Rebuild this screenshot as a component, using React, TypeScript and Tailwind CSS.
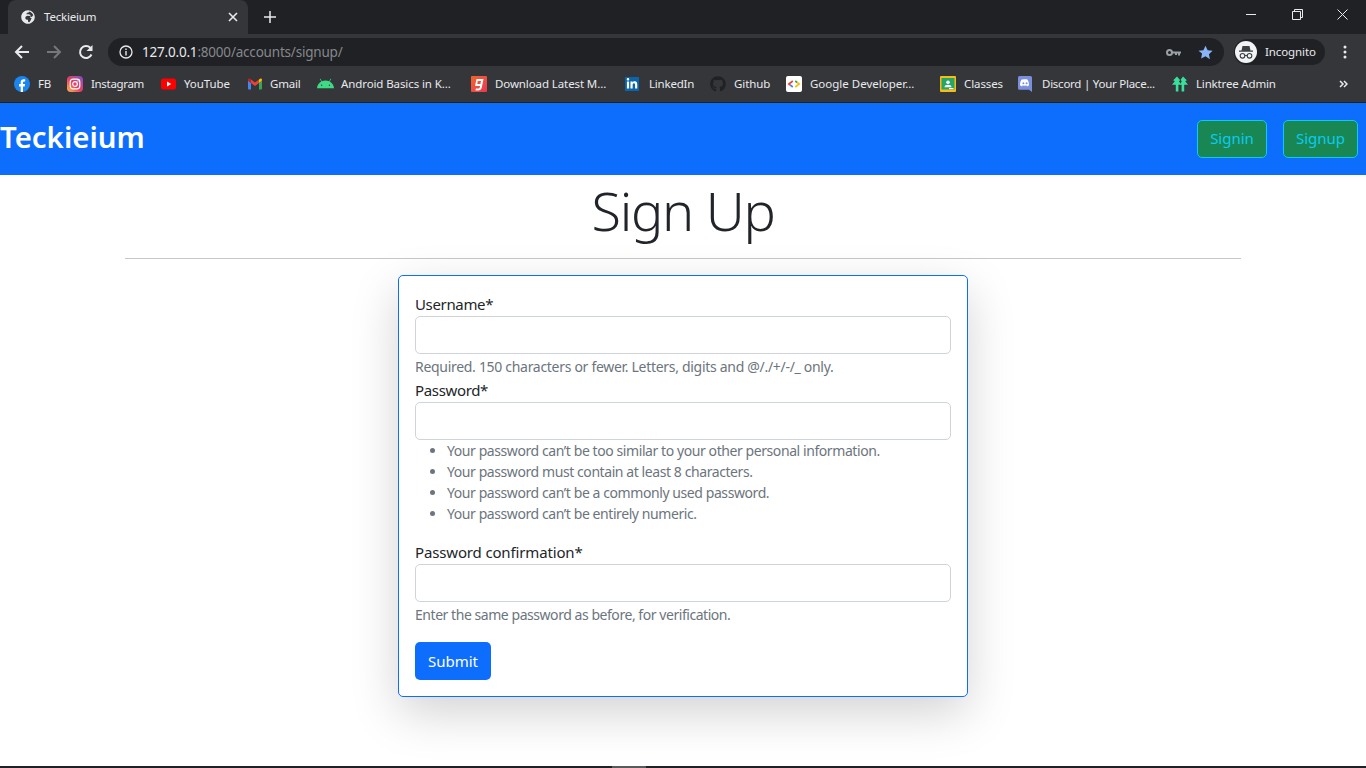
import React from "react";
import { FaGithub, FaLinkedinIn, FaAndroid, FaGlobeAfrica } from "react-icons/fa";

const F = "[font-family:'Noto_Sans',sans-serif]";

const Fb = () => (
  <svg width="16" height="16" viewBox="0 0 16 16"><circle cx="8" cy="8" r="8" fill="#1b86f0"/><path d="M6.700 16V10.400H5V8h1.700V6.300C6.700 4.400 7.900 3.300 9.600 3.300c.8 0 1.600.1 1.600.1v2h-1c-.9 0-1.200.6-1.200 1.200V8h2l-.3 2.400H9V16z" fill="#fff"/></svg>
);
const Insta = () => (
  <svg width="16" height="16" viewBox="0 0 16 16">
    <defs><linearGradient id="ig" x1="0" y1="1" x2="1" y2="0"><stop offset="0" stopColor="#fdc04f"/><stop offset="0.45" stopColor="#e9405f"/><stop offset="1" stopColor="#7d4fd1"/></linearGradient></defs>
    <rect width="16" height="16" rx="4" fill="url(#ig)"/><rect x="3.200" y="3.200" width="9.600" height="9.600" rx="2.800" fill="none" stroke="#fff" strokeWidth="1.200"/><circle cx="8" cy="8" r="2.300" fill="none" stroke="#fff" strokeWidth="1.200"/><circle cx="11" cy="5" r=".7" fill="#fff"/>
  </svg>
);
const Yt = () => (
  <svg width="16" height="16" viewBox="0 0 16 16"><rect x="0" y="2.500" width="15" height="11" rx="2.500" fill="#f00"/><path d="M6 5.500v5L10.300 8z" fill="#fff"/></svg>
);
const Gm = () => (
  <svg width="16" height="16" viewBox="0 0 16 16">
    <path d="M1 4.500v8.300c0 .4.300.7.700.7h2.300V7z" fill="#4285f4"/>
    <path d="M12 7v6.500h2.300c.4 0 .7-.3.700-.7V4.500z" fill="#34a853"/>
    <path d="M4 7 8 10l4-3V3.500L8 6.500 4 3.500z" fill="#ea4335"/>
    <path d="M1 4.500 4 7V3.500L2.900 2.700C2 2.100 1 2.800 1 3.800z" fill="#c5221f"/>
    <path d="M15 4.500 12 7V3.500l1.100-.8c.9-.6 1.900.1 1.900 1.100z" fill="#fbbc04"/>
  </svg>
);
const Gaana = () => (
  <div className="w-4 h-4 rounded-[1px] bg-gradient-to-br from-[#f2642a] to-[#e8364f] flex items-center justify-center">
    <svg width="10" height="13" viewBox="0 0 10 13"><path d="M2.500 1h7L7.800 9.500C7.400 11.500 6 12.500 4 12.500H1.500l.4-2h2.400c.8 0 1.300-.4 1.500-1.200L6 8H1zM3.700 3 3.300 6h3.100l.6-3z" fill="#fff"/></svg>
  </div>
);
const Dev = () => (
  <svg width="16" height="16" viewBox="0 0 16 16"><rect width="16" height="16" rx="2" fill="#fff"/>
    <path d="M6.800 5 2.800 8l1.400 1" fill="none" stroke="#ea4335" strokeWidth="1.600"/><path d="M4.200 9 6.800 11" fill="none" stroke="#4285f4" strokeWidth="1.600"/>
    <path d="M9.200 5l2 1.500" fill="none" stroke="#34a853" strokeWidth="1.600"/><path d="M11.200 6.500 13.200 8 9.200 11" fill="none" stroke="#fbbc04" strokeWidth="1.600"/>
  </svg>
);
const Classroom = () => (
  <svg width="16" height="16" viewBox="0 0 16 16"><rect width="16" height="16" rx="1" fill="#f9bc15"/><rect x="1.500" y="2" width="13" height="11.500" fill="#25a667"/><rect x="9" y="12" width="4.500" height="1.200" fill="#fff"/><circle cx="8" cy="6.300" r="1.800" fill="#fff"/><path d="M4.500 11.200c0-1.700 1.800-2.400 3.500-2.400s3.500.7 3.500 2.400z" fill="#fff"/></svg>
);
const Incog = () => (
  <svg width="22" height="22" viewBox="0 0 22 22"><circle cx="11" cy="11" r="11" fill="#f1f3f4"/>
    <path d="M7.500 5h7l1 4.500h2.500v1.200H4V9.500h2.500z" fill="#3c4043"/>
    <circle cx="7.500" cy="14.800" r="2.300" fill="none" stroke="#3c4043" strokeWidth="1.100"/><circle cx="14.500" cy="14.800" r="2.300" fill="none" stroke="#3c4043" strokeWidth="1.100"/><path d="M9.800 14.500h2.400" stroke="#3c4043" strokeWidth="1.100"/>
  </svg>
);
const Discord = () => (
  <svg width="14" height="16" viewBox="0 0 14 16" className="block">
    <path d="M1.500 0h11A1.500 1.500 0 0 1 14 1.500V16l-3-2.300H1.500A1.500 1.500 0 0 1 0 12.200V1.500A1.500 1.500 0 0 1 1.500 0z" fill="#7b8fdc"/>
    <path d="M4.600 3.600c1.700-.5 3.100-.5 4.800 0 1 1.500 1.600 3.300 1.600 5.700-.8.700-1.500 1-2.100 1.100l-.6-.9c1-.3 1.200-.6 1.200-.6-1.900 1-4.100 1-6 0 0 0 .2.300 1.200.6l-.6.9c-.6-.1-1.300-.4-2.100-1.100 0-2.400.6-4.200 1.600-5.700z" fill="#fff"/>
    <circle cx="5.400" cy="7.300" r="1" fill="#7b8fdc"/><circle cx="8.600" cy="7.300" r="1" fill="#7b8fdc"/>
  </svg>
);
const Linktree = () => (
  <svg width="16" height="16" viewBox="0 0 16 16" className="block">
    <path d="M5 .5 8.200 4.200 6.800 5.300 9.500 8.800H6.400V15.500H3.800V8.800H0L2.800 5.300 1.200 4.300z" fill="#39e09b"/>
    <path d="M11 .5 14.800 4.300 13.200 5.300 16 8.800h-3.800v6.700H9.600V8.800H8.200L9.700 5.300 8.600 3.700z" fill="#39e09b"/>
  </svg>
);

const marks: [React.ReactNode, string, string, string][] = [
  [<Fb />, "FB", "w-[53px]", ""],
  [<Insta />, "Instagram", "w-[94px]", "tracking-[-0.32px]"],
  [<Yt />, "YouTube", "w-[86px]", "-ml-px"],
  [<Gm />, "Gmail", "w-[70px]", "-ml-px tracking-[-0.2px]"],
  [<FaAndroid size={17} color="#3ddc84" />, "Android Basics in K...", "w-[154px]", ""],
  [<Gaana />, "Download Latest M...", "w-[154px]", ""],
  [<div className="w-[14px] h-[14px] bg-[#0a66a8] flex items-center justify-center"><FaLinkedinIn size={12} color="#fff" /></div>, "LinkedIn", "w-[85px]", "tracking-[-0.2px]"],
  [<FaGithub size={16} color="#202124" />, "Github", "w-[76px]", ""],
  [<Dev />, "Google Developer...", "w-[154px]", "tracking-[0px]"],
  [<Classroom />, "Classes", "w-[78px]", ""],
  [<Discord />, "Discord | Your Place...", "w-[154px]", "tracking-[-0.25px]"],
  [<Linktree />, "Linktree Admin", "w-[171px]", "tracking-[-0.17px]"],
];

export default function App() {
  return (
    <div className={`h-[768px] overflow-hidden flex flex-col bg-white ${F}`}>
      {/* tab strip */}
      <div className="h-[34px] bg-[#202124] flex items-end shrink-0">
        <div className="ml-2 w-[240px] h-[34px] bg-[#35363a] rounded-t-lg flex items-center pl-[13px] pr-[10px] text-[11.500px] tracking-[-0.2px] text-[#e8eaed]">
          <FaGlobeAfrica size={14} color="#e8eaed" />
          <span className="ml-[9px] flex-1">Teckieium</span>
          <svg width="10" height="10" viewBox="0 0 10 10"><path d="M1 1l8 8M9 1l-8 8" stroke="#e8eaed" strokeWidth="1.600"/></svg>
        </div>
        <div className="ml-[16px] h-[34px] flex items-center">
          <svg width="12" height="12" viewBox="0 0 12 12"><path d="M6 0v12M0 6h12" stroke="#e8eaed" strokeWidth="1.500"/></svg>
        </div>
        <div className="ml-auto h-[34px] flex items-start text-[#e8eaed]">
          <div className="w-[46px] h-[28px] flex items-center justify-center"><svg width="11" height="11" viewBox="0 0 11 11"><path d="M0 5.500h10" stroke="#e8eaed"/></svg></div>
          <div className="w-[46px] h-[28px] flex items-center justify-center"><svg width="11" height="11" viewBox="0 0 11 11"><path d="M.5 2.500h8v8h-8zM2.500 2.500v-2h8v8h-2" fill="none" stroke="#e8eaed"/></svg></div>
          <div className="w-[46px] h-[28px] pr-[1px] flex items-center justify-center"><svg width="11" height="11" viewBox="0 0 11 11"><path d="M.5.500l10 10M10.500.500l-10 10" stroke="#e8eaed"/></svg></div>
        </div>
      </div>
      {/* toolbar */}
      <div className="h-[34px] pt-[2px] bg-[#35363a] flex items-center shrink-0">
        <div className="w-[108px] flex items-center pl-[14px] gap-[16px]">
          <svg width="16" height="16" viewBox="0 0 16 16"><path d="M15 8H2M8 2 2 8l6 6" fill="none" stroke="#e8eaed" strokeWidth="2"/></svg>
          <svg width="16" height="16" viewBox="0 0 16 16"><path d="M1 8h13M8 2l6 6-6 6" fill="none" stroke="#75777a" strokeWidth="2"/></svg>
          <svg width="16" height="16" viewBox="0 0 16 16"><path d="M13.500 10.500A6 6 0 1 1 12.300 3.800" fill="none" stroke="#e8eaed" strokeWidth="2"/><path d="M14.500 1v6h-6z" fill="#e8eaed"/></svg>
        </div>
        <div className="w-[1116px] h-[28px] rounded-full bg-[#202124] flex items-center pl-[11px] pr-[11px] text-[13.500px] tracking-[-0.2px]">
          <svg width="14" height="14" viewBox="0 0 14 14"><circle cx="7" cy="7" r="6" fill="none" stroke="#e8eaed" strokeWidth="1.300"/><path d="M7 6v4.500M7 3.500v1.400" stroke="#e8eaed" strokeWidth="1.400"/></svg>
          <span className="ml-[9px] text-[#e8eaed]">127.0.0.1<span className="text-[#85888c]">:8000/accounts/signup/</span></span>
          <span className="ml-auto mr-[17px]">
            <svg width="15" height="9" viewBox="0 0 15 9" className="block"><circle cx="3.500" cy="4.500" r="2.500" fill="none" stroke="#9aa0a6" strokeWidth="2"/><path d="M6 3.500h9v2h-1v2h-2v-2h-1V7H9V5.500H6z" fill="#9aa0a6"/></svg>
          </span>
          <svg width="15" height="15" viewBox="0 0 24 24"><path d="M12 1l3.400 7.300 7.900 1-5.800 5.400 1.500 7.900L12 17.800l-7 3.800 1.500-7.900L.7 9.300l7.900-1z" fill="#8ab4f8"/></svg>
        </div>
        <div className="ml-[10px] w-[91px] h-[26px] rounded-full bg-[#202124] flex items-center pl-[1px] text-[11.500px] tracking-[-0.1px] text-[#e8eaed]">
          <Incog />
          <span className="ml-[8px]">Incognito</span>
        </div>
        <svg className="ml-[18px]" width="4" height="14" viewBox="0 0 4 14"><circle cx="2" cy="2" r="1.500" fill="#e8eaed"/><circle cx="2" cy="7" r="1.500" fill="#e8eaed"/><circle cx="2" cy="12" r="1.500" fill="#e8eaed"/></svg>
      </div>
      {/* bookmarks */}
      <div className="h-[35px] pb-[2px] bg-[#35363a] border-b border-[#202124] flex items-center pl-[14px] text-[11.500px] tracking-[-0.1px] text-[#e8eaed] shrink-0">
        {marks.map(([icon, label, w, t]) => (
          <div key={label} className={`${w} flex items-center shrink-0 whitespace-nowrap`}>
            <span className="w-[24px] shrink-0 flex items-center">{icon}</span>
            <span className={t}>{label}</span>
          </div>
        ))}
        <svg className="-ml-[4px]" width="9" height="8" viewBox="0 0 9 8"><path d="M1 1l3 3-3 3M5 1l3 3-3 3" fill="none" stroke="#e8eaed" strokeWidth="1.500"/></svg>
      </div>
      {/* navbar */}
      <div className="h-[72px] pb-[2px] bg-[#0d6efd] flex items-center shrink-0 pr-2">
        <span className="text-[29.400px] font-semibold text-white leading-none">Teckieium</span>
        <button className="ml-auto mt-[2px] w-[70px] h-[38px] pb-px rounded-[5px] bg-[#198754] border border-[#0dcaf0] text-[#0dcaf0] text-[15px]">Signin</button>
        <button className="ml-4 mt-[2px] w-[75px] h-[38px] pb-px rounded-[5px] bg-[#198754] border border-[#0dcaf0] text-[#0dcaf0] text-[15px]">Signup</button>
      </div>
      {/* page */}
      <div className="flex-1 flex flex-col items-center relative text-[#212529]">
        <h1 className="text-[54px] tracking-[-1.300px] font-light leading-[67px] mt-[2px] text-center">Sign Up</h1>
        <hr className="w-[1116px] mt-[14px] border-0 border-t border-[#c6c7c8]" />
        <div className="mt-4 w-[570px] h-[422px] bg-white border border-[#0d6efd] rounded-[5px] p-4 shadow-[0_16px_48px_rgba(0,0,0,0.175)]">
          <label className="block text-[15px] tracking-[-0.35px] leading-6">Username*</label>
          <div className="h-[38px] rounded-[5px] border border-[#ced4da]" />
          <p className="text-[14px] tracking-[-0.3px] leading-[21px] mt-[2px] text-[#6c757d]">Required. 150 characters or fewer. Letters, digits and @/./+/-/_ only.</p>
          <label className="block text-[15px] tracking-[-0.35px] leading-6 mt-[1px]">Password*</label>
          <div className="h-[38px] rounded-[5px] border border-[#ced4da]" />
          <ul className="list-disc pl-8 text-[14px] tracking-[-0.42px] leading-[21px] text-[#6c757d]">
            <li>Your password can’t be too similar to your other personal information.</li>
            <li>Your password must contain at least 8 characters.</li>
            <li>Your password can’t be a commonly used password.</li>
            <li>Your password can’t be entirely numeric.</li>
          </ul>
          <label className="block text-[15px] tracking-[-0.15px] leading-6 mt-4">Password confirmation*</label>
          <div className="h-[38px] rounded-[5px] border border-[#ced4da]" />
          <p className="text-[14px] tracking-[-0.45px] leading-[21px] mt-[2px] text-[#6c757d]">Enter the same password as before, for verification.</p>
          <button className="mt-[17px] w-[76px] h-[38px] rounded-[5px] bg-[#0d6efd] text-white text-[15px]">Submit</button>
        </div>
        <div className="absolute left-0 right-0 bottom-0 h-[2px] bg-[#202124]"><div className="ml-[612px] w-[34px] h-full bg-[#5a5a5a]" /></div>
      </div>
    </div>
  );
}
